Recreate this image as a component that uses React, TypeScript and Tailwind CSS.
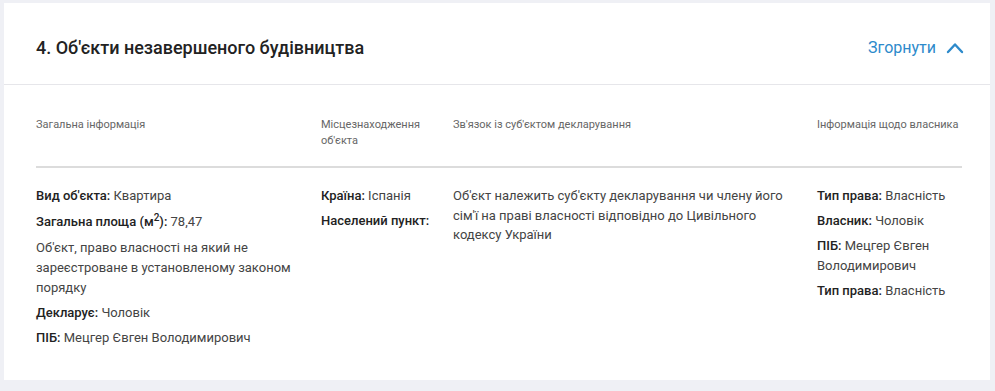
import React from 'react';

const Field = ({ label, children, tall }: { label: React.ReactNode; children?: React.ReactNode; tall?: boolean }) => (
  <div className={tall ? 'leading-[22px]' : 'leading-[20px]'}>
    <span className="font-medium text-[#222]">{label}</span>
    {children ? <span className="text-[#444]"> {children}</span> : null}
  </div>
);

const App = () => {
  return (
    <div className="min-h-screen bg-[#eff0f5] pt-[3px] pl-[4px] pr-[5px] pb-[11px]" style={{ fontFamily: 'Roboto, "Noto Sans", sans-serif' }}>
      <div className="bg-white">
        <div className="h-[82px] flex items-center justify-between pl-[32px] pr-[25px] pt-[8px] border-b border-[#e6e6ea]">
          <h2 className="text-[18px] font-medium text-[#222]">4. Об'єкти незавершеного будівництва</h2>
          <button className="flex items-center gap-[9px] text-[#2d8acb] text-[16px]">
            Згорнути
            <svg width="20" height="20" viewBox="0 0 20 20" fill="none">
              <path d="M3 14 L10 6.5 L17 14" stroke="#2d8acb" strokeWidth="2.4" strokeLinecap="round" strokeLinejoin="round" />
            </svg>
          </button>
        </div>
        <div className="pl-[32px] pr-[28px] pt-[32px] pb-[32px]">
          <div className="grid grid-cols-[285px_132px_364px_145px] text-[11px] leading-[16px] text-[#666] pb-[17px]">
            <div>Загальна інформація</div>
            <div className="pr-[20px]">Місцезнаходження об'єкта</div>
            <div>Зв'язок із суб'єктом декларування</div>
            <div>Інформація щодо власника</div>
          </div>
          <div className="h-[2px] bg-[#dcdcdc]"></div>
          <div className="grid grid-cols-[285px_132px_364px_145px] text-[13px] pt-[18px]">
            <div className="flex flex-col gap-[5px] pr-[20px]">
              <Field label="Вид об'єкта:">Квартира</Field>
              <Field tall label={<>Загальна площа (м<sup className="text-[10px]">2</sup>):</>}>78,47</Field>
              <div className="leading-[20px] text-[#444]">Об'єкт, право власності на який не зареєстроване в установленому законом порядку</div>
              <Field label="Декларує:">Чоловік</Field>
              <Field label="ПІБ:">Мецгер Євген Володимирович</Field>
            </div>
            <div className="flex flex-col gap-[5px]">
              <Field label="Країна:">Іспанія</Field>
              <Field label="Населений пункт:" />
            </div>
            <div className="leading-[19.5px] text-[#444] pr-[30px]">
              Об'єкт належить суб'єкту декларування чи члену його сім'ї на праві власності відповідно до Цивільного кодексу України
            </div>
            <div className="flex flex-col gap-[5px]">
              <Field label="Тип права:">Власність</Field>
              <Field label="Власник:">Чоловік</Field>
              <Field label="ПІБ:">Мецгер Євген Володимирович</Field>
              <Field label="Тип права:">Власність</Field>
            </div>
          </div>
        </div>
      </div>
    </div>
  );
};

export default App;
